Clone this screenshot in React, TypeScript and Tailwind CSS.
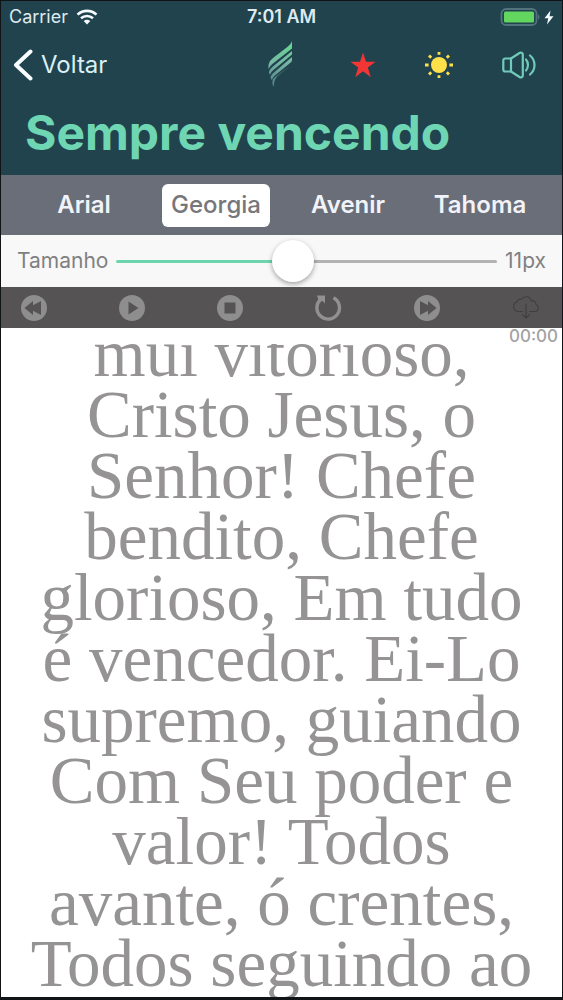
import { useState } from "react";

const FONTS = ["Arial", "Georgia", "Avenir", "Tahoma"];
const MAX_SIZE = 24;

const LYRICS = [
  "mui vitorioso,",
  "Cristo Jesus, o",
  "Senhor! Chefe",
  "bendito, Chefe",
  "glorioso, Em tudo",
  "é vencedor. Ei-Lo",
  "supremo, guiando",
  "Com Seu poder e",
  "valor! Todos",
  "avante, ó crentes,",
  "Todos seguindo ao",
];

function StatusBar() {
  return (
    <div className="grid h-8 grid-cols-3 items-center px-2 text-lg text-[#dfeaf0]">
      <div className="flex items-center gap-2">
        <span>Carrier</span>
        <svg width="22" height="16" viewBox="0 0 22 16" fill="none" stroke="#f4fbff" strokeWidth="2.6" aria-hidden="true">
          <path d="M1.5 5.6C7 .6 15 .6 20.500 5.600" />
          <path d="M5 9.300c3.500-3.100 8.500-3.100 12 0" />
          <path d="M11 15.500 7.700 12.100c2-1.700 4.600-1.700 6.600 0z" fill="#f4fbff" stroke="none" />
        </svg>
      </div>
      <span className="text-center font-semibold">7:01 AM</span>
      <div className="flex items-center justify-end gap-1">
        <svg width="40" height="18" viewBox="0 0 40 18" aria-hidden="true">
          <rect x="1.500" y="1" width="35" height="16" rx="4.500" fill="none" stroke="#52737b" strokeWidth="1.800" />
          <rect x="4" y="3.500" width="30" height="11" rx="1.500" fill="#62d65f" />
          <path d="M38 6.500c2 .8 2 4.200 0 5z" fill="#52737b" />
        </svg>
        <svg width="10" height="15" viewBox="0 0 10 15" aria-hidden="true">
          <path d="M6.500.5.500 8.300h3.700L3 14.500l6.500-8.200H5.600z" fill="#f4fbff" />
        </svg>
      </div>
    </div>
  );
}

function FeatherIcon() {
  return (
    <svg width="28" height="48" viewBox="0 0 28 48" fill="none" aria-hidden="true">
      <defs>
        <linearGradient id="feather" x1="0" y1="0" x2="0" y2="48" gradientUnits="userSpaceOnUse">
          <stop offset="0" stopColor="#62dd8c" />
          <stop offset=".45" stopColor="#76b7a4" />
          <stop offset="1" stopColor="#4e7480" />
        </linearGradient>
      </defs>
      <g fill="url(#feather)">
        <path d="M26 0v7.500L7 22.500c-2 1.700-3.300 3.300-4.300 5.500-1-4.500.7-8 4.300-11L20 7c3.500-2.800 5-4 6-7z" />
        <path d="M26 10v3.500L8 28.500c-2 1.700-3.500 3.200-4 5.500l-1-2.500c.3-2.500 1.700-4 4-6z" />
        <path d="M26 16v3c0 1-.4 1.800-1.300 2.600L9.500 34C7.500 35.700 6.300 37.200 6 39.500l-1.500-2.800c.3-2 1.500-3.500 3.500-5.200z" />
        <path d="M24.500 24.500 13 33.800c-3.500 2.800-5 6-5 12.200-1.700-2-2-4-1.300-6.500.5-1.700 1.500-2.700 3.300-4z" />
      </g>
    </svg>
  );
}

function StarIcon() {
  return (
    <svg width="26" height="26" viewBox="0 0 26 26" aria-hidden="true">
      <path d="M13 .5 16 9.800h9.600l-7.800 5.800 3 9.600L13 19.300l-7.800 5.900 3-9.600L.4 9.800H10z" fill="#f43535" />
    </svg>
  );
}

function SunIcon() {
  return (
    <svg width="30" height="28" viewBox="0 0 30 28" aria-hidden="true">
      <g fill="#fde04a">
        <circle cx="15" cy="14" r="8" />
        <g stroke="#fde04a" strokeWidth="2.800">
          <path d="M15 1v2.800M15 24.200V27M1 14h3.600M25.400 14H29M5 4.500l2.200 2.200M22.800 21.300l2.200 2.200M25 4.500l-2.200 2.200M7.200 21.300 5 23.500" />
        </g>
      </g>
    </svg>
  );
}

function SpeakerIcon() {
  return (
    <svg width="34" height="28" viewBox="0 0 34 28" fill="none" stroke="#70cbb9" strokeWidth="2.200" strokeLinecap="round" strokeLinejoin="round" aria-hidden="true">
      <path d="M9 7.500H3.300a2 2 0 0 0-2 2v9a2 2 0 0 0 2 2H9z" />
      <path d="M9 7.500 17.500 2c1.500-.9 3.300-.3 3.300 1.500v21c0 1.800-1.800 2.400-3.300 1.500L9 20.500" />
      <path d="M24 8.500c2.600 3 2.600 8 0 11M28 4.500c6 5 6 14 0 19" />
    </svg>
  );
}

type PlayerIconName = "rewind" | "play" | "stop" | "repeat" | "forward" | "download";

function PlayerIcon({ name }: { name: PlayerIconName }) {
  if (name === "repeat") {
    return (
      <svg width="28" height="28" viewBox="0 0 28 28" fill="none" aria-hidden="true">
        <path d="M19.500 3.800A11.300 11.300 0 1 1 6.500 5.500" stroke="#929191" strokeWidth="3.400" />
        <path d="M3 1.500h8V9.500L8.500 7 5 7.500z" fill="#929191" />
      </svg>
    );
  }
  if (name === "download") {
    return (
      <svg width="28" height="24" viewBox="0 0 28 24" fill="none" stroke="#403f40" strokeWidth="1.100" strokeLinecap="round" strokeLinejoin="round" aria-hidden="true">
        <path d="M10.500 15.500H6a5 5 0 0 1-1-9.700 3.500 3.500 0 0 1 4.500-2.600C12-.5 18-.2 19.500 5c3-.6 4.400 1.200 4.300 3 3.700 1.800 3.400 7.300-1.300 7.500h-5" />
        <path d="M14 8v14M10.500 18.700 14 22l3.500-3.300" />
      </svg>
    );
  }
  return (
    <svg width="26" height="26" viewBox="0 0 26 26" aria-hidden="true">
      <circle cx="13" cy="13" r="13" fill="#8f8e8e" />
      <g fill="#555354">
        {name === "rewind" && <path d="M3.500 13 12 6v4.300L20 6v14l-8-4.300V20z" />}
        {name === "play" && <path d="M9.500 6.500 19.500 13l-10 6.500z" />}
        {name === "stop" && <rect x="7.500" y="7.500" width="11" height="11" />}
        {name === "forward" && <path d="M22.500 13 14 6v4.300L6 6v14l8-4.300V20z" />}
      </g>
    </svg>
  );
}

const PLAYER: { name: PlayerIconName; label: string }[] = [
  { name: "rewind", label: "Voltar faixa" },
  { name: "play", label: "Tocar" },
  { name: "stop", label: "Parar" },
  { name: "repeat", label: "Repetir" },
  { name: "forward", label: "Avançar" },
  { name: "download", label: "Baixar" },
];

export default function App() {
  const [font, setFont] = useState("Georgia");
  const [size, setSize] = useState(11);
  const fill = (size / MAX_SIZE) * 100;

  return (
    <div className="flex h-screen flex-col overflow-hidden border-x border-b-3 border-t border-[#101416] bg-white font-['Inter','Liberation_Sans',sans-serif]">
      <header className="shrink-0 bg-[#21434e] pb-4">
        <StatusBar />
        <nav className="flex h-16 items-center justify-between pl-3 pr-6">
          <a href="#voltar" className="flex items-center gap-2 text-2xl text-[#d9f0f5]">
            <svg width="20" height="32" viewBox="0 0 20 32" fill="none" stroke="#f8fdff" strokeWidth="4" strokeLinecap="round" strokeLinejoin="round" aria-hidden="true">
              <path d="M17.500 2.500 3 16l14.500 13.500" />
            </svg>
            Voltar
          </a>
          <div className="flex items-center gap-12">
            <button type="button" aria-label="Hinário" className="mr-2"><FeatherIcon /></button>
            <button type="button" aria-label="Favorito"><StarIcon /></button>
            <button type="button" aria-label="Brilho"><SunIcon /></button>
            <button type="button" aria-label="Som" className="pr-0.5"><SpeakerIcon /></button>
          </div>
        </nav>
        <h1 className="pl-6 pt-2.5 text-5xl leading-[52px] font-bold text-[#6fd6b3]">Sempre vencendo</h1>
      </header>

      <div className="grid h-[60px] shrink-0 grid-cols-4 items-center bg-[#6a6e78] pl-[17px] pr-4">
        {FONTS.map((name) => (
          <button
            key={name}
            type="button"
            aria-pressed={font === name}
            onClick={() => setFont(name)}
            className={
              font === name
                ? "mx-3 h-[43px] rounded-md bg-white text-2xl font-medium text-[#77777b]"
                : "mx-3 h-[43px] rounded-md text-2xl font-semibold text-[#f1f3f9]"
            }
          >
            {name}
          </button>
        ))}
      </div>

      <div className="flex h-[52px] shrink-0 items-center gap-2 bg-[#f8f8f9] px-4 text-[21px] text-[#808082]">
        <label htmlFor="tamanho">Tamanho</label>
        <input
          id="tamanho"
          type="range"
          min={0}
          max={MAX_SIZE}
          value={size}
          onChange={(e) => setSize(Number(e.target.value))}
          style={{ backgroundImage: `linear-gradient(to right, #6dd5ae ${fill}%, #b3b3b4 ${fill}%)` }}
          className="h-[3px] min-w-0 flex-1 appearance-none rounded-full [&::-webkit-slider-thumb]:size-[42px] [&::-webkit-slider-thumb]:appearance-none [&::-webkit-slider-thumb]:rounded-full [&::-webkit-slider-thumb]:bg-white [&::-webkit-slider-thumb]:shadow-[0_2px_5px_rgba(0,0,0,0.35)]"
        />
        <output htmlFor="tamanho">{size}px</output>
      </div>

      <div className="flex h-[41px] shrink-0 items-center justify-between bg-[#555354] pl-5 pr-[22px]">
        {PLAYER.map(({ name, label }) => (
          <button key={name} type="button" aria-label={label}>
            <PlayerIcon name={name} />
          </button>
        ))}
      </div>

      <time className="h-4 shrink-0 pr-1 text-right text-[17px] leading-4 font-medium text-[#a3a2a4]">00:00</time>

      <main className="min-h-0 flex-1 overflow-hidden">
        <p className="-mt-[21px] text-center font-['Liberation_Serif',serif] text-[67px] leading-[61px] text-[#959394]">
          {LYRICS.map((line) => (
            <span key={line} className="block whitespace-nowrap">{line}</span>
          ))}
        </p>
      </main>
    </div>
  );
}
